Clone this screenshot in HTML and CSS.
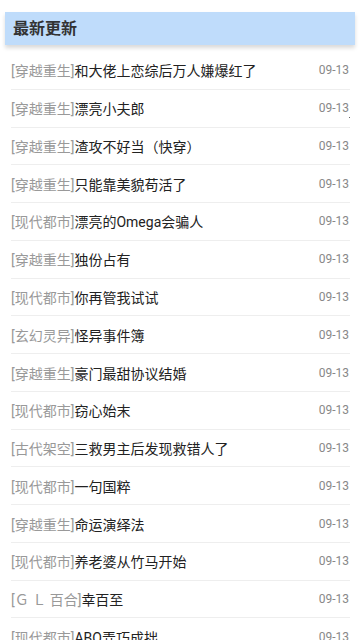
FILE: index.html
```html
<!DOCTYPE html>
<html lang="zh-CN">
<head>
<meta charset="utf-8">
<meta name="viewport" content="width=device-width, initial-scale=1">
<link rel="stylesheet" href="styles.css">
</head>
<body>
<div class="page">
  <div class="header">最新更新</div>
  <ul class="list">
    <li class="row"><span class="name"><span class="cat">[穿越重生]</span>和大佬上恋综后万人嫌爆红了</span><span class="date">09-13</span></li>
    <li class="row"><span class="name"><span class="cat">[穿越重生]</span>漂亮小夫郎</span><span class="date">09-13</span><span class="dot"></span></li>
    <li class="row"><span class="name"><span class="cat">[穿越重生]</span>渣攻不好当（快穿）</span><span class="date">09-13</span></li>
    <li class="row"><span class="name"><span class="cat">[穿越重生]</span>只能靠美貌苟活了</span><span class="date">09-13</span></li>
    <li class="row"><span class="name"><span class="cat">[现代都市]</span>漂亮的Omega会骗人</span><span class="date">09-13</span></li>
    <li class="row"><span class="name"><span class="cat">[穿越重生]</span>独份占有</span><span class="date">09-13</span></li>
    <li class="row"><span class="name"><span class="cat">[现代都市]</span>你再管我试试</span><span class="date">09-13</span></li>
    <li class="row"><span class="name"><span class="cat">[玄幻灵异]</span>怪异事件簿</span><span class="date">09-13</span></li>
    <li class="row"><span class="name"><span class="cat">[穿越重生]</span>豪门最甜协议结婚</span><span class="date">09-13</span></li>
    <li class="row"><span class="name"><span class="cat">[现代都市]</span>窃心始末</span><span class="date">09-13</span></li>
    <li class="row"><span class="name"><span class="cat">[古代架空]</span>三救男主后发现救错人了</span><span class="date">09-13</span></li>
    <li class="row"><span class="name"><span class="cat">[现代都市]</span>一句国粹</span><span class="date">09-13</span></li>
    <li class="row"><span class="name"><span class="cat">[穿越重生]</span>命运演绎法</span><span class="date">09-13</span></li>
    <li class="row"><span class="name"><span class="cat">[现代都市]</span>养老婆从竹马开始</span><span class="date">09-13</span></li>
    <li class="row"><span class="name"><span class="cat">[Ｇ Ｌ 百合]</span>幸百至</span><span class="date">09-13</span></li>
    <li class="row"><span class="name"><span class="cat">[现代都市]</span>ABO弄巧成拙</span><span class="date">09-13</span></li>
  </ul>
</div>
</body>
</html>
```
FILE: styles.css
```css
html, body {
  margin: 0;
  padding: 0;
  background: #fff;
}
body {
  font-family: Roboto, "Noto Sans CJK SC", "Noto Sans", sans-serif;
  color: #333;
  overflow: hidden;
  height: 640px;
}
.page {
  padding-top: 12px;
}
.header {
  margin: 0 5px;
  height: 33px;
  line-height: 33px;
  padding-left: 8px;
  background: #bfdcfb;
  font-size: 16px;
  font-weight: bold;
  color: #333;
  box-shadow: 0 3px 4px rgba(0, 0, 0, 0.15);
}
.list {
  list-style: none;
  margin: 7px 0 0;
  padding: 0 10px 0 11px;
}
.row {
  position: relative;
  display: flex;
  align-items: center;
  justify-content: space-between;
  height: 36.77px;
  border-bottom: 1px solid #eeeeee;
}
.name {
  font-size: 14px;
  color: #222;
  white-space: nowrap;
}
.cat {
  color: #999;
}
.date {
  font-size: 12px;
  color: #888;
  padding-right: 1px;
}
.dot {
  position: absolute;
  right: 0;
  top: 27px;
  width: 1px;
  height: 1px;
  background: #666;
}
```
